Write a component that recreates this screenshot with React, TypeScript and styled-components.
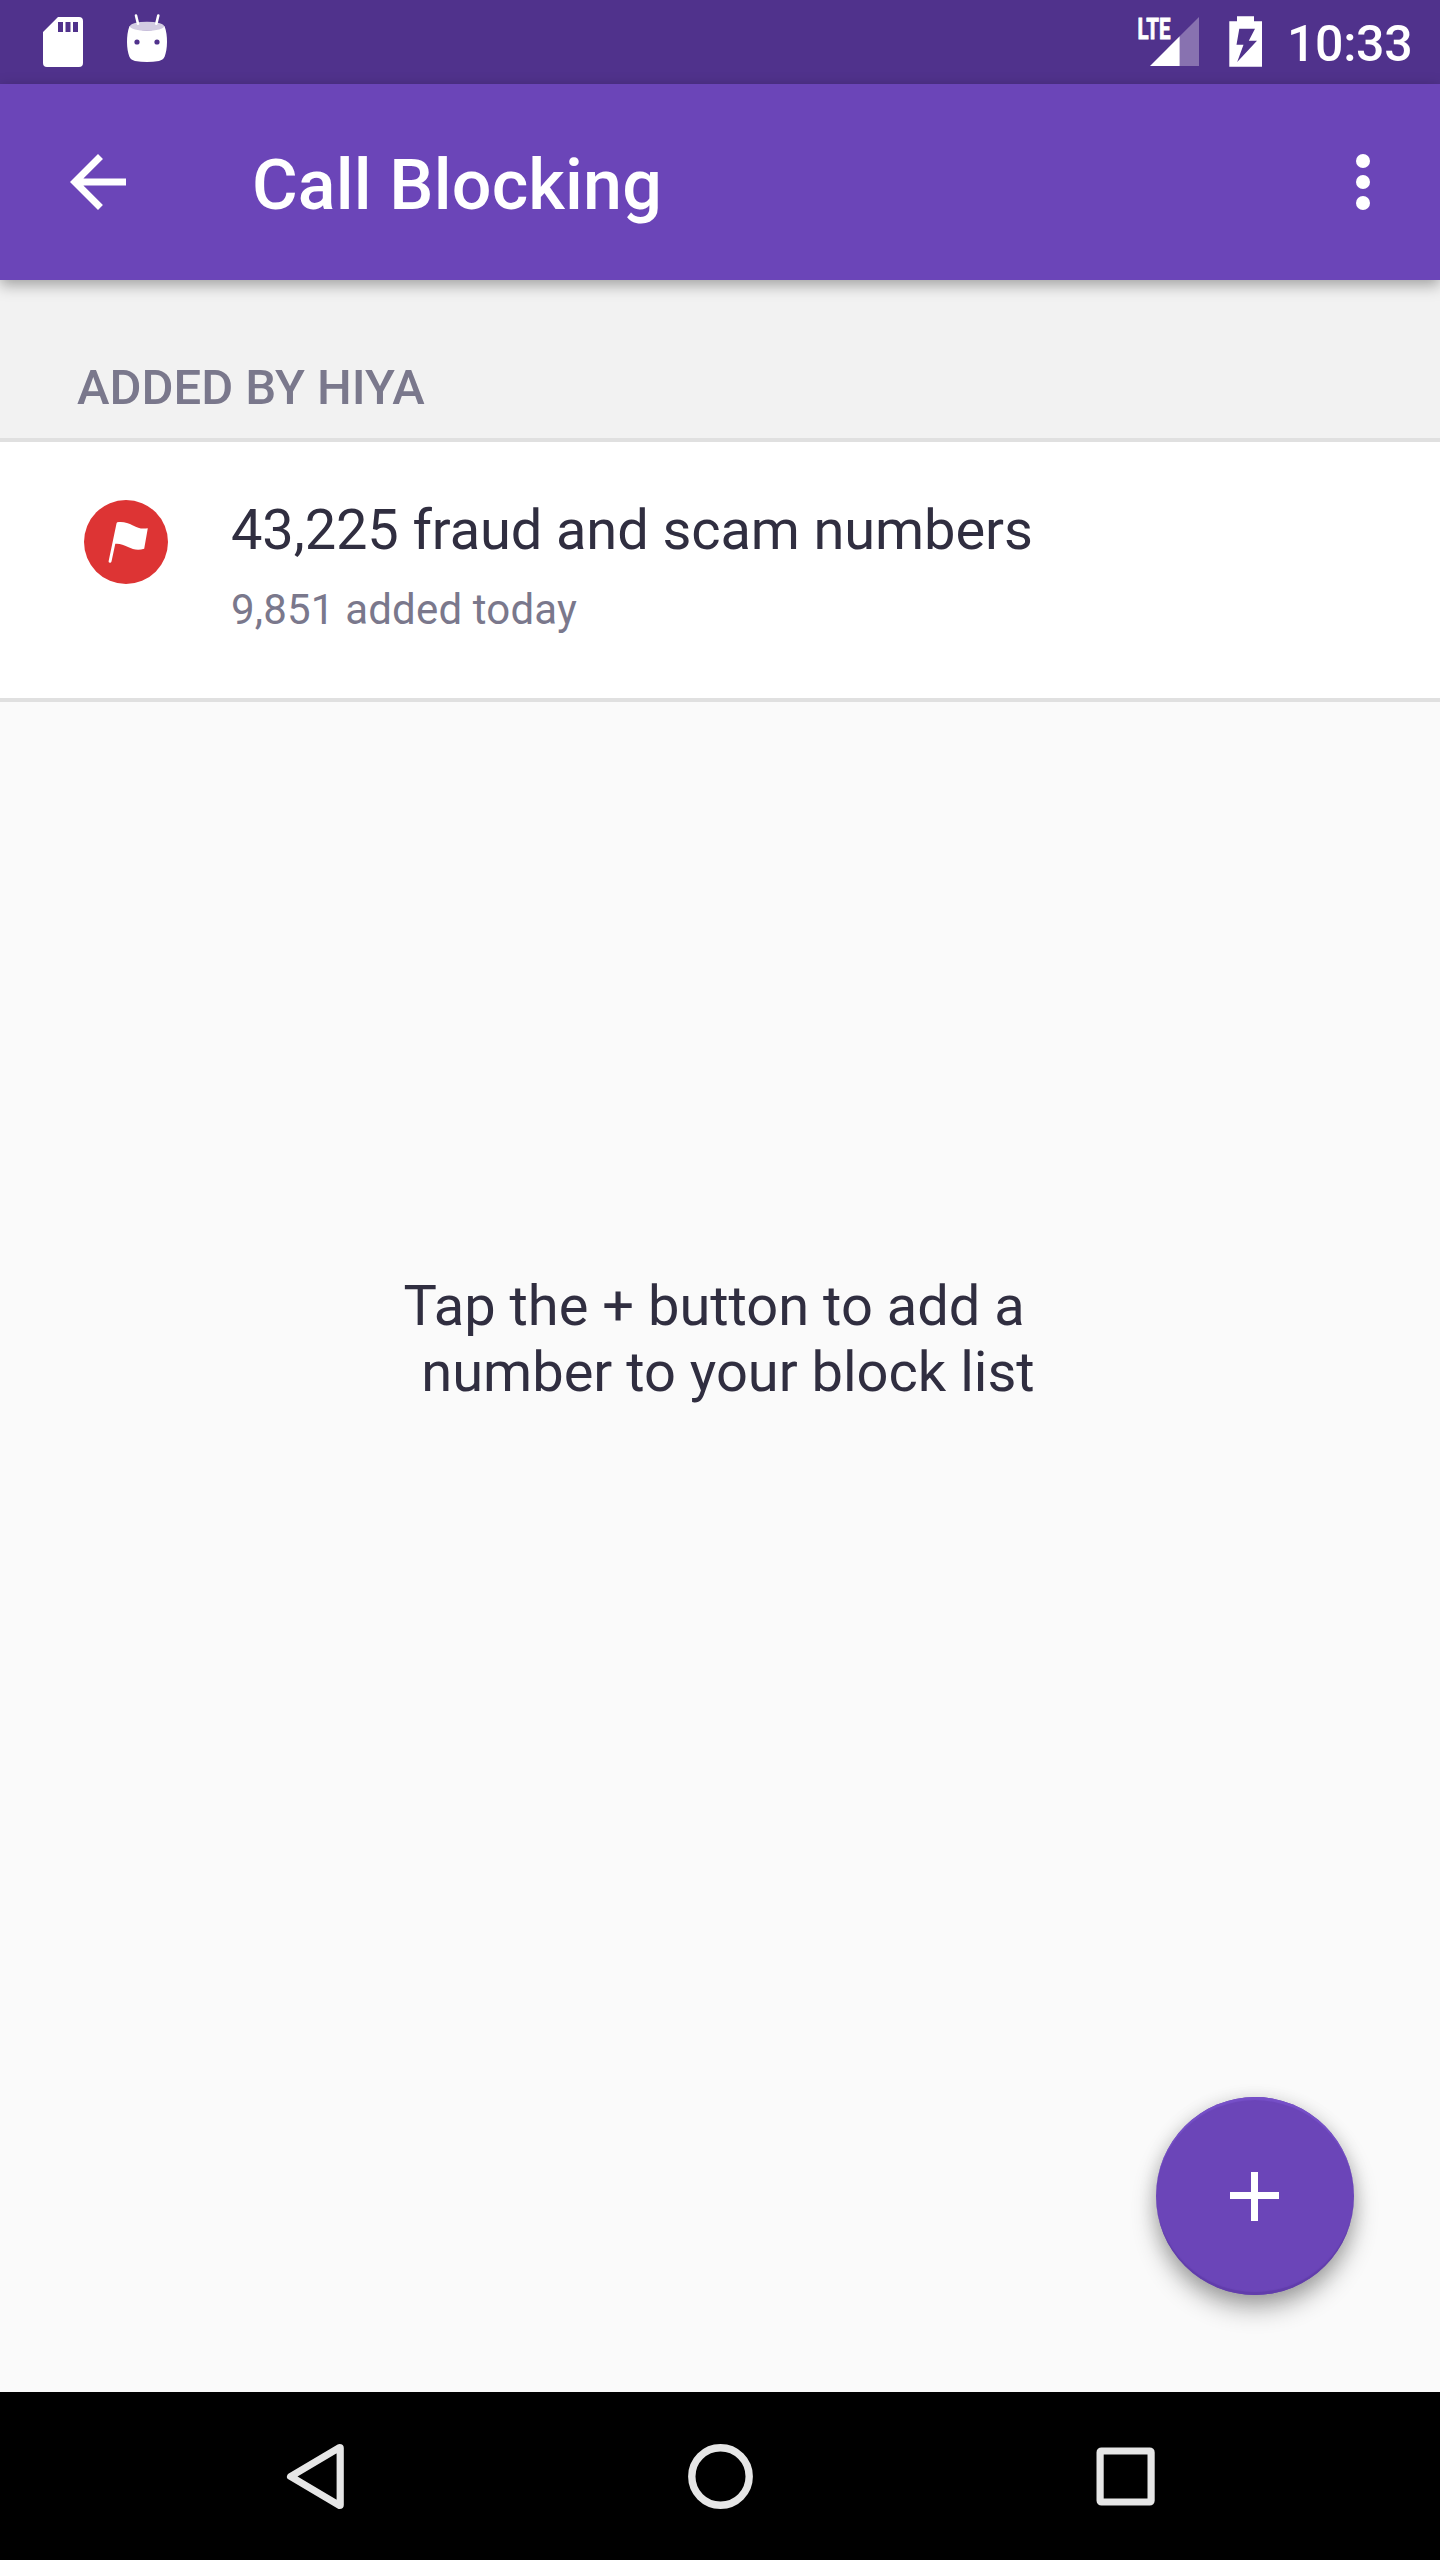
import React from 'react';
import styled, { createGlobalStyle } from 'styled-components';

const colors = {
  statusBar: '#50328c',
  primary: '#6b45b8',
  text: '#302e40',
  muted: '#7a788c',
  divider: '#e0e0e0',
  nav: '#e6e6e6',
};

const GlobalStyle = createGlobalStyle`
  body {
    margin: 0;
    background: #fafafa;
    font-family: Roboto, "Noto Sans", sans-serif;
  }
  * { box-sizing: border-box; }
  svg { display: block; flex: none; }
  h1, h2, p { margin: 0; }
  button { border: 0; padding: 0; background: none; font: inherit; }
`;

const Screen = styled.div`
  display: flex;
  flex-direction: column;
  width: 1440px;
  height: 2560px;
  overflow: hidden;
  background: #fafafa;
`;

const StatusBar = styled.div`
  display: flex;
  justify-content: space-between;
  flex: none;
  height: 84px;
  background: ${colors.statusBar};
`;

const StatusGroup = styled.div<{ $gap: number; $left?: number; $right?: number }>`
  display: flex;
  gap: ${(p) => p.$gap}px;
  padding-left: ${(p) => p.$left ?? 0}px;
  padding-right: ${(p) => p.$right ?? 0}px;
`;

const Clock = styled.span`
  width: 125px;
  font-size: 50px;
  font-weight: 500;
  line-height: 88px;
  letter-spacing: -0.3px;
  white-space: nowrap;
  color: #fff;
`;

const AppBar = styled.header`
  position: relative;
  z-index: 1;
  display: flex;
  align-items: center;
  flex: none;
  height: 196px;
  padding: 0 35px 0 56px;
  background: ${colors.primary};
  box-shadow: 0 5px 14px rgba(0, 0, 0, 0.34);
`;

const IconButton = styled.button`
  width: 84px;
  height: 84px;
  color: #fff;
`;

const Title = styled.h1`
  flex: 1;
  padding: 6px 0 0 112px;
  font-size: 70px;
  font-weight: 500;
  line-height: 82px;
  letter-spacing: 0.17px;
  color: #fff;
`;

const SectionHeader = styled.h2`
  flex: none;
  height: 162px;
  padding: 79px 0 0 77px;
  border-bottom: 4px solid ${colors.divider};
  background: #f2f2f2;
  font-size: 49px;
  font-weight: 500;
  line-height: 58px;
  color: ${colors.muted};
`;

const ListItem = styled.div`
  display: flex;
  gap: 63px;
  flex: none;
  height: 260px;
  padding: 54px 84px 0;
  border-bottom: 4px solid ${colors.divider};
  background: #fff;
`;

const ItemIcon = styled.div`
  padding-top: 4px;
`;

const ItemTitle = styled.p`
  font-size: 56px;
  line-height: 68px;
  letter-spacing: -0.11px;
  color: ${colors.text};
`;

const ItemSubtitle = styled.p`
  padding-top: 21px;
  font-size: 42px;
  line-height: 50px;
  letter-spacing: 0.18px;
  color: ${colors.muted};
`;

const Content = styled.main`
  display: flex;
  flex-direction: column;
  justify-content: space-between;
  flex: 1;
  padding: 571px 86px 97px 88px;
`;

const EmptyMessage = styled.p`
  font-size: 56px;
  line-height: 66px;
  text-align: center;
  white-space: pre;
  color: ${colors.text};
`;

const AddButton = styled.button`
  display: flex;
  align-items: center;
  justify-content: center;
  align-self: flex-end;
  width: 198px;
  height: 198px;
  border-radius: 50%;
  background: ${colors.primary};
  box-shadow:
    0 14px 24px rgba(0, 0, 0, 0.3),
    0 3px 18px rgba(0, 0, 0, 0.15),
    inset 0 4px 1px -1px #7650c8,
    inset 0 -4px 1px -1px #613dab;
`;

const NavBar = styled.nav`
  display: flex;
  justify-content: center;
  align-items: center;
  gap: 321px;
  flex: none;
  height: 168px;
  background: #000;
`;

const SdCardIcon = () => (
  <svg width="42" height="84" viewBox="42 0 42 84">
    <path
      fill="#fff"
      fillRule="evenodd"
      d="M58 17H79a4 4 0 0 1 4 4V63a4 4 0 0 1-4 4H47a4 4 0 0 1-4-4V32ZM58 22v10h5V22ZM65.5 22v10h5V22ZM73 22v10h5V22Z"
    />
  </svg>
);

const DroidIcon = () => (
  <svg width="42" height="84" viewBox="126 0 42 84">
    <path
      fill="#fff"
      d="M129.5 26Q147 35 164.5 26C166.5 31 167 37 167 42C167 48 166 53 164.7 56.5C163.7 59.2 161.5 60.3 159 60.9C151 62.4 143 62.4 135 60.9C132.5 60.3 130.3 59.2 129.3 56.5C128 53 127 48 127 42C127 37 127.5 31 129.5 26Z"
    />
    <ellipse cx="147" cy="26.3" rx="17" ry="4.5" fill="#d3cce2" />
    <path d="M136 15.5 138 23.8M158.3 15.5 156.3 23.8" stroke="#fff" strokeWidth="2.6" strokeLinecap="round" />
    <circle cx="137" cy="42" r="2.6" fill={colors.statusBar} />
    <circle cx="157" cy="42" r="2.6" fill={colors.statusBar} />
  </svg>
);

const SignalIcon = () => (
  <svg width="64" height="84" viewBox="1136 0 64 84">
    <path fill="#8872b0" d="M1179.7 36.3 1199 17V66H1179.7Z" />
    <path fill="#fff" d="M1150 66 1179.7 36.3V66Z" />
    <text
      x="1137.5"
      y="38.8"
      fontSize="29"
      fontWeight="700"
      fill="#fff"
      stroke="#fff"
      strokeWidth="0.9"
      textLength="33"
      lengthAdjust="spacingAndGlyphs"
    >
      LTE
    </text>
  </svg>
);

const BatteryIcon = () => (
  <svg width="34" height="84" viewBox="1229 0 34 84">
    <path
      fill="#fff"
      fillRule="evenodd"
      d="M1237 16.2H1254V21.3H1262V66.8H1229.3V21.3H1237ZM1239.3 28.8 1236.5 44.7H1243.5L1237.2 62 1257 40.8H1248.8L1255 28.8Z"
    />
  </svg>
);

const BackArrowIcon = () => (
  <svg width="84" height="84" viewBox="0 0 24 24" fill="currentColor">
    <path d="M20 11H7.83l5.59-5.59L12 4l-8 8 8 8 1.41-1.41L7.83 13H20v-2z" />
  </svg>
);

const MoreIcon = () => (
  <svg width="84" height="84" viewBox="0 0 24 24" fill="currentColor">
    <circle cx="12" cy="6" r="2" />
    <circle cx="12" cy="12" r="2" />
    <circle cx="12" cy="18" r="2" />
  </svg>
);

const FlagIcon = () => (
  <svg width="84" height="84" viewBox="84 500 84 84">
    <circle cx="126" cy="542" r="42" fill="#dd3434" />
    <path
      fill="#fff"
      d="M117.3 522.3C123 521.3 128 523 133 525.5C138 528.3 142 529.2 147.8 528.2L144.2 548.7C138 550.7 133 549.5 128 547C123.5 544.8 120 543.3 115.3 543.7L111.5 561.5Q111.1 562.9 109.8 562.7Q108.3 562.5 108.6 561.2L116.5 523.5Q116.7 522.5 117.3 522.3Z"
    />
  </svg>
);

const PlusIcon = () => (
  <svg width="84" height="84" viewBox="1213 2154 84 84" fill="#fff">
    <rect x="1251" y="2172" width="7" height="49" />
    <rect x="1230" y="2192" width="49" height="7" />
  </svg>
);

const NavBackIcon = () => (
  <svg width="84" height="84" viewBox="273 2434 84 84" fill="none" stroke={colors.nav} strokeWidth="7.2">
    <path strokeLinejoin="round" d="M290.6 2476.5 339.5 2447.5Q340.2 2447.5 340.2 2448V2505Q340.2 2505.5 339.5 2505.5Z" />
  </svg>
);

const NavHomeIcon = () => (
  <svg width="84" height="84" viewBox="678 2434 84 84" fill="none" stroke={colors.nav} strokeWidth="7.4">
    <circle cx="720.5" cy="2476.5" r="28.7" />
  </svg>
);

const NavRecentsIcon = () => (
  <svg width="84" height="84" viewBox="1083 2434 84 84">
    <path
      fill={colors.nav}
      fillRule="evenodd"
      d="M1101.5 2447.4H1149.7a5 5 0 0 1 5 5V2500.6a5 5 0 0 1-5 5H1101.5a5 5 0 0 1-5-5V2452.4a5 5 0 0 1 5-5ZM1103.7 2454.6V2498.4H1147.5V2454.6Z"
    />
  </svg>
);

export default function App() {
  return (
    <>
      <GlobalStyle />
      <Screen>
        <StatusBar>
          <StatusGroup $gap={42} $left={42}>
            <SdCardIcon />
            <DroidIcon />
          </StatusGroup>
          <StatusGroup $gap={29} $right={28}>
            <SignalIcon />
            <StatusGroup $gap={24}>
              <BatteryIcon />
              <Clock>10:33</Clock>
            </StatusGroup>
          </StatusGroup>
        </StatusBar>
        <AppBar>
          <IconButton aria-label="Back">
            <BackArrowIcon />
          </IconButton>
          <Title>Call Blocking</Title>
          <IconButton aria-label="More options">
            <MoreIcon />
          </IconButton>
        </AppBar>
        <SectionHeader>ADDED BY HIYA</SectionHeader>
        <ListItem>
          <ItemIcon>
            <FlagIcon />
          </ItemIcon>
          <div>
            <ItemTitle>43,225 fraud and scam numbers</ItemTitle>
            <ItemSubtitle>9,851 added today</ItemSubtitle>
          </div>
        </ListItem>
        <Content>
          <EmptyMessage>{'Tap the + button to add a \n number to your block list'}</EmptyMessage>
          <AddButton aria-label="Add number">
            <PlusIcon />
          </AddButton>
        </Content>
        <NavBar>
          <NavBackIcon />
          <NavHomeIcon />
          <NavRecentsIcon />
        </NavBar>
      </Screen>
    </>
  );
}
